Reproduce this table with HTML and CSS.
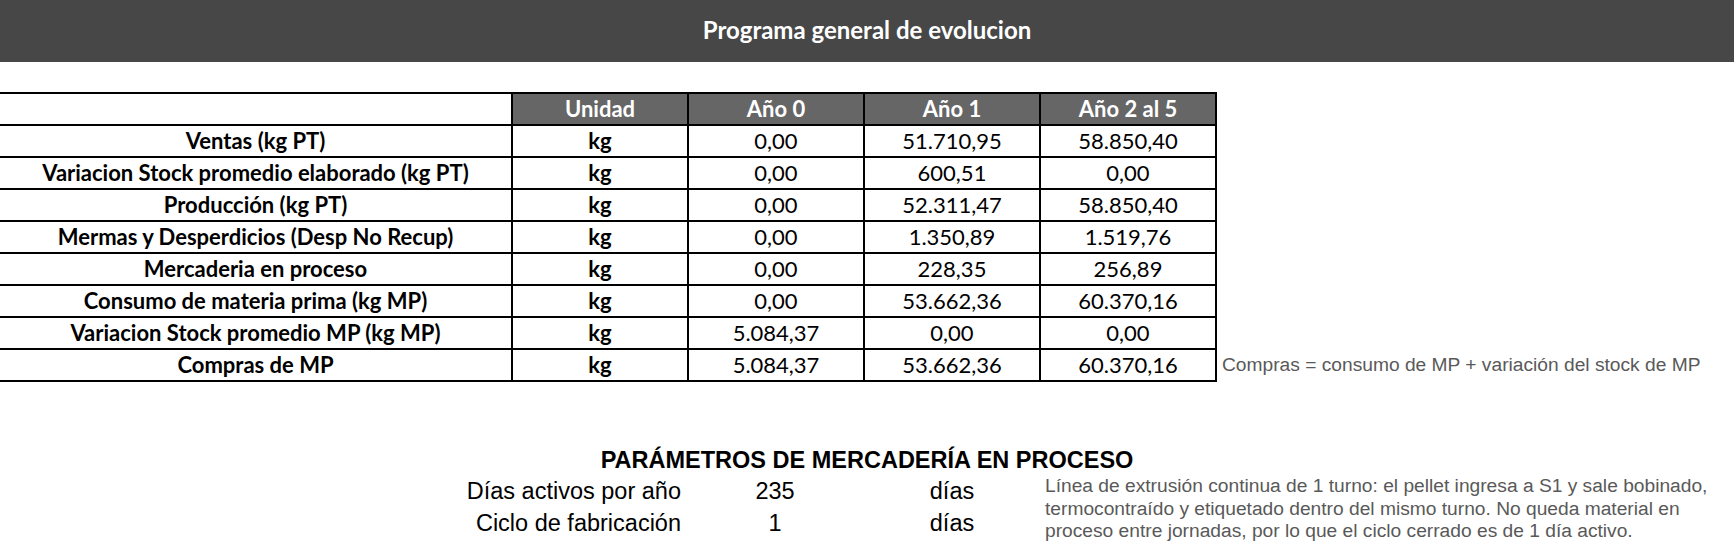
FILE: index.html
```html
<!DOCTYPE html>
<html lang="es">
<head>
<meta charset="utf-8">
<title>Programa general de evolucion</title>
<link rel="stylesheet" href="styles.css">
</head>
<body>
<header class="banner">Programa general de evolucion</header>

<section class="evo-wrap">
  <table class="evo">
    <colgroup>
      <col class="c-label">
      <col class="c-num">
      <col class="c-num">
      <col class="c-num">
      <col class="c-num">
      <col class="c-note">
    </colgroup>
    <thead>
      <tr>
        <th class="label blank"></th>
        <th>Unidad</th>
        <th>Año 0</th>
        <th>Año 1</th>
        <th>Año 2 al 5</th>
        <td class="note"></td>
      </tr>
    </thead>
    <tbody>
      <tr><td class="label">Ventas (kg PT)</td><td class="unit">kg</td><td>0,00</td><td>51.710,95</td><td>58.850,40</td><td class="note"></td></tr>
      <tr><td class="label">Variacion Stock promedio elaborado (kg PT)</td><td class="unit">kg</td><td>0,00</td><td>600,51</td><td>0,00</td><td class="note"></td></tr>
      <tr><td class="label">Producción (kg PT)</td><td class="unit">kg</td><td>0,00</td><td>52.311,47</td><td>58.850,40</td><td class="note"></td></tr>
      <tr><td class="label">Mermas y Desperdicios (Desp No Recup)</td><td class="unit">kg</td><td>0,00</td><td>1.350,89</td><td>1.519,76</td><td class="note"></td></tr>
      <tr><td class="label">Mercaderia en proceso</td><td class="unit">kg</td><td>0,00</td><td>228,35</td><td>256,89</td><td class="note"></td></tr>
      <tr><td class="label">Consumo de materia prima (kg MP)</td><td class="unit">kg</td><td>0,00</td><td>53.662,36</td><td>60.370,16</td><td class="note"></td></tr>
      <tr><td class="label">Variacion Stock promedio MP (kg MP)</td><td class="unit">kg</td><td>5.084,37</td><td>0,00</td><td>0,00</td><td class="note"></td></tr>
      <tr><td class="label">Compras de MP</td><td class="unit">kg</td><td>5.084,37</td><td>53.662,36</td><td>60.370,16</td><td class="note">Compras = consumo de MP + variación del stock de MP</td></tr>
    </tbody>
  </table>
</section>

<section class="params">
  <h2 class="params-title">PARÁMETROS DE MERCADERÍA EN PROCESO</h2>
  <div class="params-grid">
    <div class="p-label">Días activos por año</div>
    <div class="p-value">235</div>
    <div class="p-unit">días</div>
    <p class="p-desc">Línea de extrusión continua de 1 turno: el pellet ingresa a S1 y sale bobinado,<br>termocontraído y etiquetado dentro del mismo turno. No queda material en<br>proceso entre jornadas, por lo que el ciclo cerrado es de 1 día activo.</p>
    <div class="p-label">Ciclo de fabricación</div>
    <div class="p-value">1</div>
    <div class="p-unit">días</div>
  </div>
</section>
</body>
</html>
```

FILE: styles.css
```css
html, body {
  margin: 0;
  padding: 0;
  background: #ffffff;
}

body {
  width: 1734px;
  height: 546px;
  overflow: hidden;
  font-family: Lato, "Open Sans", sans-serif;
  color: #000000;
}

.banner {
  box-sizing: border-box;
  height: 62px;
  padding-bottom: 4px;
  background: #474747;
  color: #ffffff;
  font-family: Lato, "Open Sans", sans-serif;
  font-weight: 700;
  font-size: 24px;
  display: flex;
  align-items: center;
  justify-content: center;
}

.evo-wrap {
  padding-top: 30px;
}

.evo {
  border-collapse: collapse;
  table-layout: fixed;
  width: 1734px;
  font-size: 22px;
}

.c-label { width: 512px; }
.c-num { width: 176px; }
.c-note { width: 518px; }

.evo tr {
  height: 32px;
}

.evo th,
.evo td {
  border: 2px solid #000000;
  padding: 0;
  text-align: center;
  vertical-align: middle;
  line-height: 28px;
  white-space: nowrap;
}

.evo th {
  background: #666666;
  color: #ffffff;
  font-weight: 700;
}

.evo th.blank {
  background: #ffffff;
}

.evo .label {
  border-left: none;
  font-weight: 700;
}

.evo .unit {
  font-weight: 700;
}

.evo td.note {
  border: none;
  text-align: left;
  padding-left: 5px;
  font-family: "Liberation Sans", Arial, sans-serif;
  font-size: 19.2px;
  color: #595959;
}

.params {
  font-family: "Liberation Sans", Arial, sans-serif;
}

.params-title {
  margin: 68px 0 0 0;
  text-align: center;
  font-size: 23.5px;
  line-height: 20px;
  font-weight: 700;
  color: #000000;
}

.params-grid {
  display: grid;
  grid-template-columns: 681px 188px 166px 1fr;
  grid-auto-rows: 32px;
  margin-top: 5px;
  font-size: 23.5px;
  line-height: 32px;
}

.p-label {
  text-align: right;
}

.p-value,
.p-unit {
  text-align: center;
}

.p-desc {
  grid-column: 4;
  grid-row: 1 / span 2;
  margin: 0;
  padding-left: 10px;
  font-size: 19.2px;
  line-height: 22.5px;
  color: #595959;
  white-space: nowrap;
}
```
